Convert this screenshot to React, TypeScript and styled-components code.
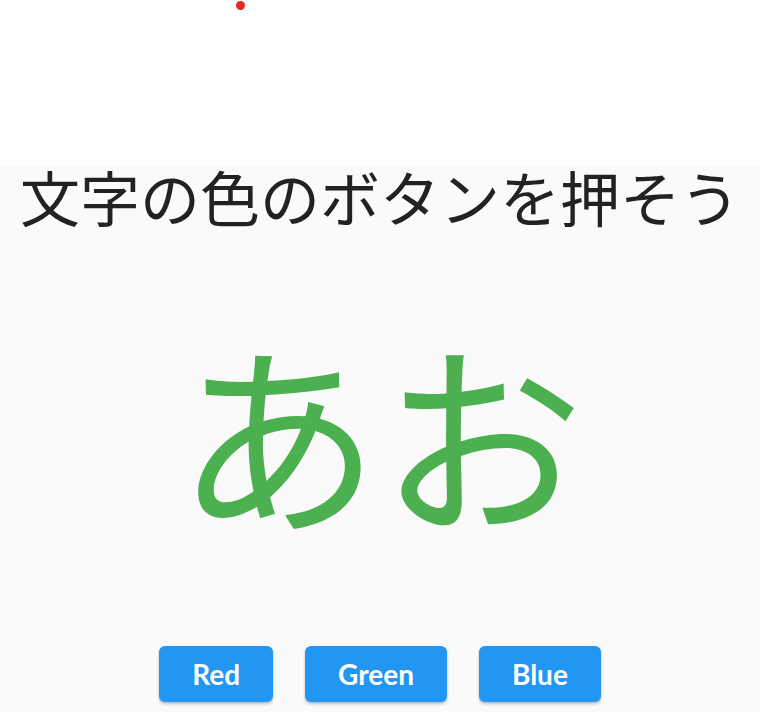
import React from "react";
import styled, { createGlobalStyle } from "styled-components";

const Global = createGlobalStyle`
  html, body { margin: 0; padding: 0; background: #ffffff; }
  body { font-family: "Noto Sans CJK JP", "Noto Sans", sans-serif; }
`;

const Page = styled.div`
  position: relative;
  display: flex;
  flex-direction: column;
  min-height: 712px;
`;

const Top = styled.div`
  height: 166px;
  background: #ffffff;
`;

const Dot = styled.span`
  position: absolute;
  left: 236px;
  top: 1px;
  width: 9px;
  height: 9px;
  border-radius: 50%;
  background: #e8262a;
`;

const Main = styled.main`
  flex: 1;
  background: #fafafa;
  display: flex;
  flex-direction: column;
  align-items: center;
`;

const Heading = styled.h1`
  margin: 0;
  font-family: "Noto Sans CJK JP", sans-serif;
  font-weight: 400;
  font-size: 60px;
  line-height: 60px;
  color: #222222;
`;

const Kana = styled.div<{ $color: string }>`
  margin-top: 94px;
  font-family: "Noto Sans CJK JP", sans-serif;
  font-size: 204px;
  line-height: 220px;
  color: ${(p) => p.$color};
`;

const Buttons = styled.div`
  margin-top: 106px;
  display: flex;
  gap: 32px;
`;

const Button = styled.button`
  height: 56px;
  padding: 0 33px;
  border: none;
  border-radius: 6px;
  background: #2196f3;
  color: #ffffff;
  font-family: Lato, "Open Sans", sans-serif;
  font-weight: 700;
  font-size: 28px;
  box-shadow: 0 2px 3px rgba(0, 0, 0, 0.25);
  cursor: pointer;
`;

export default function App() {
  const [color, setColor] = React.useState("#4caf50");
  return (
    <>
      <Global />
      <Page>
        <Dot />
        <Top />
        <Main>
          <Heading>文字の色のボタンを押そう</Heading>
          <Kana $color={color}>あお</Kana>
          <Buttons>
            <Button onClick={() => setColor("#f44336")}>Red</Button>
            <Button onClick={() => setColor("#4caf50")}>Green</Button>
            <Button onClick={() => setColor("#2196f3")}>Blue</Button>
          </Buttons>
        </Main>
      </Page>
    </>
  );
}
